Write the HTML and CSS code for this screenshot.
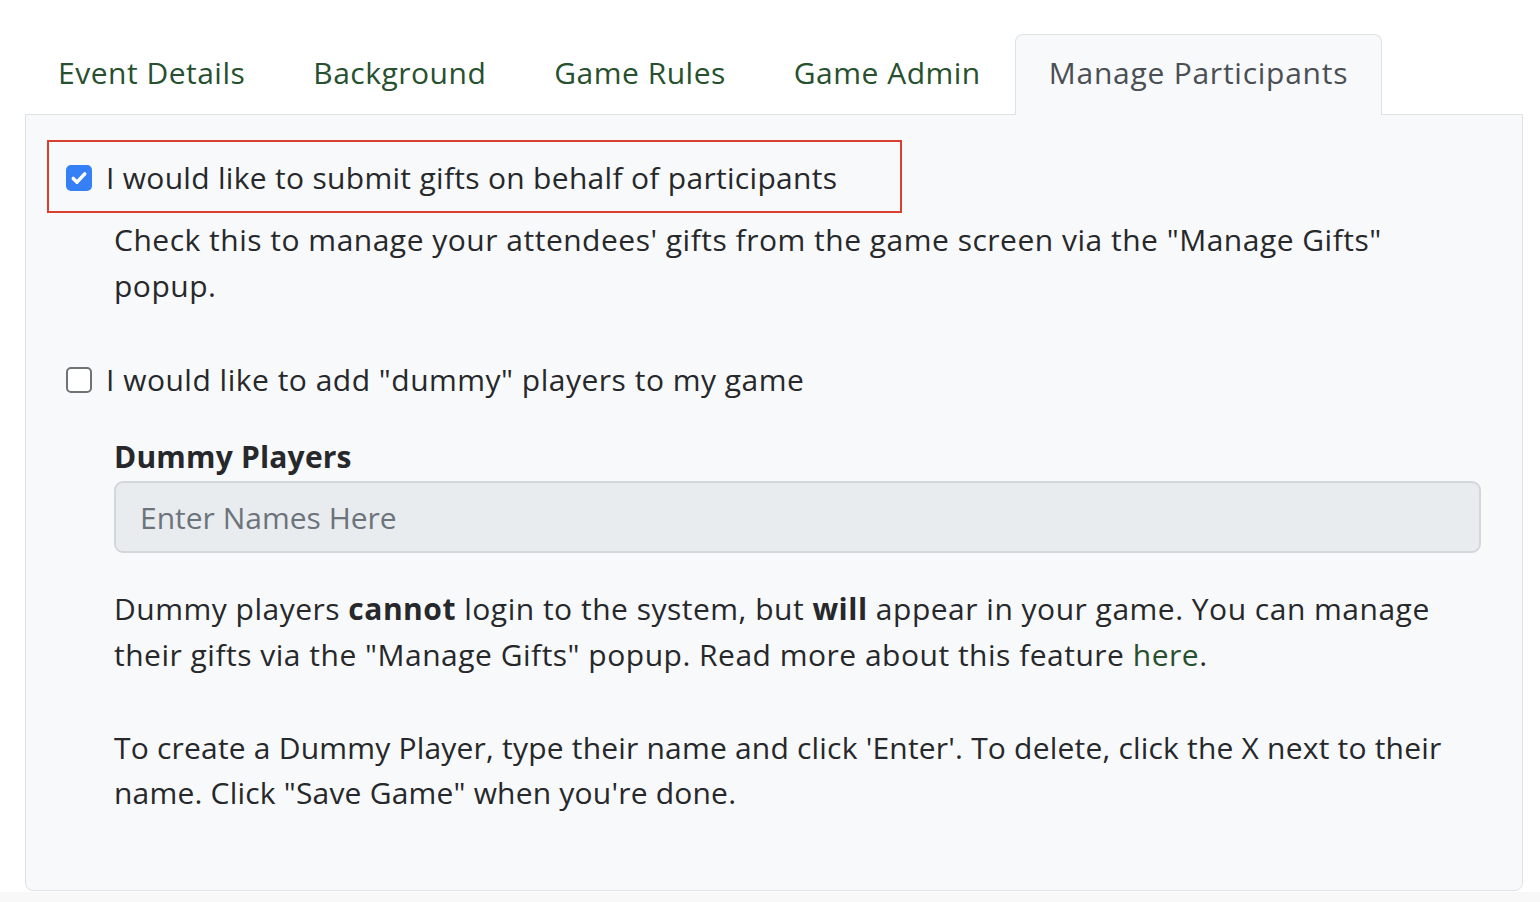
FILE: index.html
```html
<!DOCTYPE html>
<html lang="en">
<head>
<meta charset="utf-8">
<title>Manage Participants</title>
<link rel="stylesheet" href="styles.css">
</head>
<body>
<div class="page">
  <ul class="tabs">
    <li class="tab">Event Details</li>
    <li class="tab">Background</li>
    <li class="tab">Game Rules</li>
    <li class="tab">Game Admin</li>
    <li class="tab active">Manage Participants</li>
  </ul>
  <div class="panel">
    <div class="highlight">
      <label class="check">
        <input type="checkbox" class="box" checked>
        <span class="tight">I would like to submit gifts on behalf of participants</span>
      </label>
    </div>
    <p class="help">Check this to manage your attendees' gifts from the game screen via the "Manage Gifts" popup.</p>
    <label class="check plain">
      <input type="checkbox" class="box">
      <span>I would like to add "dummy" players to my game</span>
    </label>
    <div class="indent">
      <div class="field-label">Dummy Players</div>
      <input class="names" type="text" placeholder="Enter Names Here">
      <p class="note">Dummy players <b>cannot</b> login to the system, but <b>will</b> appear in your game. You can manage their gifts via the "Manage Gifts" popup. Read more about this feature <a class="link" href="#">here</a>.</p>
      <p class="note gap">To create a Dummy Player, type their name and click 'Enter'. To delete, click the X next to their name. Click "Save Game" when you're done.</p>
    </div>
  </div>
  <div class="footer-strip"></div>
</div>
</body>
</html>
```

FILE: styles.css
```css
html, body {
  margin: 0;
  padding: 0;
  background: #ffffff;
}
body {
  font-family: "Open Sans", "DejaVu Sans", sans-serif;
  font-size: 30px;
  color: #26282b;
  letter-spacing: 0.5px;
}
.page {
  padding: 34px 17px 0 24px;
}
.tabs {
  list-style: none;
  margin: 0;
  padding: 0;
  display: flex;
  position: relative;
  z-index: 1;
  margin-bottom: -1px;
}
.tab {
  height: 79px;
  line-height: 75px;
  padding: 0 33px;
  border: 1px solid transparent;
  border-bottom: 0;
  border-radius: 8px 8px 0 0;
  color: #27502f;
  white-space: nowrap;
  letter-spacing: 0.5px;
}
.tab.active {
  color: #4a4f55;
  background: #f8f9fa;
  border-color: #dee2e6;
  height: 80px;
  letter-spacing: 0.75px;
}
.panel {
  margin-left: 1px;
  background: #f8f9fa;
  border: 1px solid #dee2e6;
  border-radius: 0 0 8px 8px;
  padding: 25px 41px 74px 21px;
}
.highlight {
  width: 834px;
  border: 2px solid #d9412f;
  padding: 13px 0 11px 17px;
}
.check {
  display: flex;
  align-items: center;
  gap: 14px;
  line-height: 45px;
}
.tight {
  letter-spacing: 0.3px;
}
.check.plain {
  padding-left: 19px;
  margin-top: 48px;
}
.box {
  appearance: none;
  -webkit-appearance: none;
  margin: 0;
  width: 26px;
  height: 26px;
  flex: none;
  border: 2px solid #6f7378;
  border-radius: 5px;
  background: #ffffff;
}
.box:checked {
  border-color: #3580f6;
  background: #3580f6 url("data:image/svg+xml;utf8,<svg xmlns='http://www.w3.org/2000/svg' viewBox='0 0 20 20'><path d='M4.8 10.4l3.4 3.4 7-7.6' fill='none' stroke='white' stroke-width='3.2' stroke-linecap='round' stroke-linejoin='round'/></svg>") center / 100% 100% no-repeat;
}
.help {
  margin: 4px 0 0 67px;
  line-height: 46px;
}
.indent {
  margin-left: 67px;
}
.field-label {
  margin-top: 32px;
  font-weight: 700;
  line-height: 46px;
  letter-spacing: 0.2px;
}
.names {
  display: block;
  box-sizing: border-box;
  width: 100%;
  height: 72px;
  margin: 1px 0 0 0;
  padding: 0 24px;
  border: 2px solid #d3d7db;
  border-radius: 9px;
  background: #e9ecef;
  font: inherit;
  letter-spacing: 0;
  color: #26282b;
}
.names::placeholder {
  color: #6c737b;
}
.note {
  margin: 33px 0 0 0;
  line-height: 45.5px;
}
.note.gap {
  margin-top: 47.5px;
  letter-spacing: 0.2px;
}
.note b {
  font-weight: 700;
}
.link {
  color: #27502f;
  text-decoration: none;
}
.footer-strip {
  height: 12px;
  margin: 1px -17px 0 -24px;
  background: #f8f8f9;
}
```
